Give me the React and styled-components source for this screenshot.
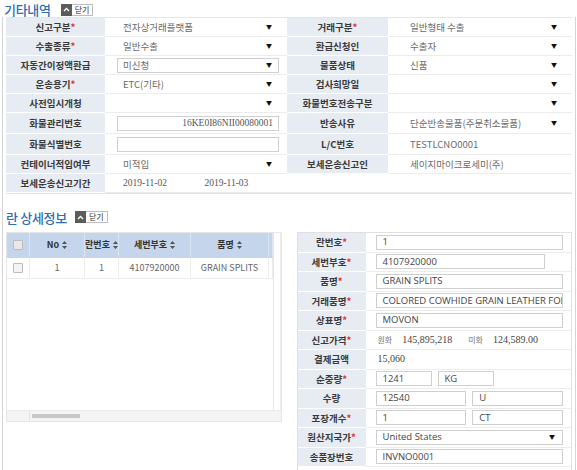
import React from "react";
import styled, { createGlobalStyle } from "styled-components";

const GlobalStyle = createGlobalStyle`
  body {
    margin: 0;
    background: #fff;
    font-family: "Open Sans", "Noto Sans CJK KR", sans-serif;
  }
`;

const Page = styled.div`
  width: 577px;
  height: 470px;
  box-sizing: border-box;
  padding: 2px 1px 1px 2px;
  overflow: hidden;
`;

const Frame = styled.div`
  border: 1px solid #d4d4d4;
  border-top: none;
  height: 467px;
  box-sizing: border-box;
  padding: 0 3px 0 3px;
  display: flex;
  flex-direction: column;
`;

const SectionHead = styled.div`
  display: flex;
  align-items: center;
  height: ${(p) => p.h}px;
  margin-left: ${(p) => p.ml || 0}px;
  margin-top: ${(p) => p.mt || 0}px;
`;

const Title = styled.div`
  font-family: "Noto Sans CJK KR", sans-serif;
  font-size: 13px;
  line-height: 15px;
  color: #2f6cb5;
  font-weight: 500;
  letter-spacing: -0.3px;
  margin-right: ${(p) => p.gap}px;
`;

const Toggle = styled.div`
  display: flex;
  height: 12px;
`;

const ToggleIcon = styled.div`
  width: 11px;
  height: 12px;
  background: #5b5b5b;
  display: flex;
  align-items: center;
  justify-content: center;
`;

const ToggleText = styled.div`
  border: 1px solid #bdbdbd;
  border-left: none;
  box-sizing: border-box;
  height: 12px;
  padding: 0 3px;
  font-family: "Noto Sans CJK KR", sans-serif;
  font-size: 8px;
  line-height: 10px;
  color: #333;
`;

const FormGrid = styled.div`
  display: grid;
  grid-template-columns: 99px 182px 101px 184px;
  grid-template-rows: 19px 19px 19px 19px 19px 21px 21px 19px 19px;
  border-top: 1px solid #e6e6e6;
  border-bottom: 1px solid #e2e2e2;
`;

const Label = styled.div`
  background: #e7ecf3;
  display: flex;
  align-items: center;
  justify-content: center;
  font-family: "Noto Sans CJK KR", sans-serif;
  font-size: 9.5px;
  line-height: 12px;
  font-weight: 700;
  color: #3a3a3a;
  border-bottom: 1px solid #fff;
  box-sizing: border-box;
  white-space: nowrap;
`;

const Req = styled.span`
  color: #e03030;
`;

const Cell = styled.div`
  display: flex;
  align-items: center;
  border-bottom: 1px solid #ececec;
  box-sizing: border-box;
  min-width: 0;
  grid-column: ${(p) => p.span || "auto"};
`;

const Field = styled.div`
  flex: 1;
  min-width: 0;
  height: 15px;
  box-sizing: border-box;
  margin: 0 8px 0 ${(p) => p.ml || 12}px;
  padding: 0 5px;
  border: 1px solid ${(p) => (p.bordered ? "#cfcfcf" : "transparent")};
  display: flex;
  align-items: center;
  justify-content: ${(p) => (p.right ? "flex-end" : "space-between")};
  font-size: 9.5px;
  line-height: 12px;
  color: #6a6a6a;
  white-space: nowrap;
  overflow: hidden;
  font-family: "Noto Sans CJK KR", sans-serif;
`;

const Arrow = styled.span`
  font-size: 6px;
  line-height: 8px;
  color: #111;
  margin-right: 1px;
`;

const DateText = styled.span`
  font-size: 9.5px;
  line-height: 12px;
  color: #555;
  font-family: "Liberation Serif", serif;
  width: ${(p) => (p.w ? `${p.w}px` : "auto")};
`;

const Bottom = styled.div`
  display: flex;
  margin-top: 7px;
  gap: 15px;
  flex: 1;
`;

const GridBox = styled.div`
  width: 276px;
  height: 190px;
  box-sizing: border-box;
  border: 1px solid #e6e6e6;
  display: flex;
  flex-direction: column;
`;

const GridMain = styled.div`
  flex: 1;
  display: flex;
  min-height: 0;
`;

const Viewport = styled.div`
  width: 266px;
  overflow: hidden;
`;

const VScroll = styled.div`
  flex: 1;
  border-left: 1px solid #e6e6e6;
  border-right: 1px solid #ececec;
`;

const Row = styled.div`
  display: flex;
  height: ${(p) => p.h}px;
  background: ${(p) => (p.head ? "#c5d5eb" : "#fff")};
  border-bottom: 1px solid ${(p) => (p.head ? "#c5d5eb" : "#ececec")};
`;

const GCell = styled.div`
  width: ${(p) => p.w}px;
  flex-shrink: 0;
  display: flex;
  align-items: center;
  justify-content: ${(p) => (p.cut ? "flex-start" : "center")};
  padding-left: ${(p) => (p.cut ? 3 : 0)}px;
  gap: 3px;
  box-sizing: border-box;
  border-right: 1px solid ${(p) => (p.head ? "#dbe5f3" : "#ececec")};
  font-family: "Noto Sans CJK KR", sans-serif;
  font-size: 9px;
  line-height: 12px;
  font-weight: ${(p) => (p.head ? 700 : 400)};
  color: ${(p) => (p.head ? "#333" : "#666")};
  white-space: nowrap;
  overflow: hidden;
`;

const Check = styled.span`
  width: 8px;
  height: 8px;
  border: 1px solid #bcbcbc;
  background: ${(p) => (p.head ? "#e8e8e8" : "#f3f3f3")};
  border-radius: 1px;
`;

const HScroll = styled.div`
  height: 10px;
  display: flex;
  background: #f4f4f4;
  border-top: 1px solid #ececec;
`;

const HArrow = styled.div`
  width: 22px;
  border-right: 1px solid #e2e2e2;
`;

const HTrack = styled.div`
  flex: 1;
  display: flex;
  align-items: center;
  padding-left: 2px;
`;

const Thumb = styled.div`
  width: 48px;
  height: 4px;
  background: #c8c8c8;
`;

const Detail = styled.div`
  width: 276px;
  box-sizing: border-box;
  border: 1px solid #e0e0e0;
  border-bottom: none;
  display: grid;
  grid-template-columns: 68px 1fr;
  grid-auto-rows: 19.5px;
`;

const DCell = styled.div`
  display: flex;
  align-items: center;
  gap: 6px;
  padding: 0 8px 0 10px;
  border-bottom: 1px solid #ececec;
  box-sizing: border-box;
  min-width: 0;
`;

const Input = styled.div`
  width: ${(p) => (p.w ? `${p.w}px` : "auto")};
  flex: ${(p) => (p.w ? "none" : 1)};
  min-width: 0;
  height: 15px;
  box-sizing: border-box;
  border: 1px solid #cfcfcf;
  padding: 0 6px;
  display: flex;
  align-items: center;
  justify-content: space-between;
  font-size: 9.5px;
  line-height: 12px;
  color: #444;
  white-space: nowrap;
  overflow: hidden;
`;

const Small = styled.span`
  font-family: "Noto Sans CJK KR", sans-serif;
  font-size: 8px;
  line-height: 10px;
  color: #777;
  margin-left: ${(p) => p.ml || 0}px;
`;

const Num = styled.span`
  font-family: "Liberation Serif", serif;
  font-size: 10px;
  line-height: 12px;
  color: #444;
  margin-left: ${(p) => p.ml || 0}px;
`;

const Chevron = () => (
  <svg width="7" height="5" viewBox="0 0 7 5">
    <path d="M1 4 L3.5 1.5 L6 4" fill="none" stroke="#fff" strokeWidth="1.3" />
  </svg>
);

const Sort = () => (
  <svg width="5" height="8" viewBox="0 0 5 8">
    <path d="M2.5 0 L5 3 L0 3 Z M2.5 8 L5 5 L0 5 Z" fill="#555" />
  </svg>
);

const Head = ({ title, h, gap, ml, mt }) => (
  <SectionHead h={h} ml={ml} mt={mt}>
    <Title gap={gap}>{title}</Title>
    <Toggle>
      <ToggleIcon>
        <Chevron />
      </ToggleIcon>
      <ToggleText>닫기</ToggleText>
    </Toggle>
  </SectionHead>
);

const L = ({ text, req }) => (
  <Label>
    {text}
    {req && <Req>*</Req>}
  </Label>
);

const Sel = ({ value, bordered, ml }) => (
  <Cell>
    <Field bordered={bordered} ml={ml}>
      <span>{value}</span>
      <Arrow>▼</Arrow>
    </Field>
  </Cell>
);

const Txt = ({ value, ml }) => (
  <Cell>
    <Field ml={ml}>
      <span>{value}</span>
    </Field>
  </Cell>
);

const cols = [
  { w: 23, head: <Check head />, body: <Check /> },
  { w: 55, head: "No", body: "1" },
  { w: 34, head: "란번호", body: "1" },
  { w: 72, head: "세번부호", body: "4107920000" },
  { w: 78, head: "품명", body: "GRAIN SPLITS" },
];

export default function App() {
  return (
    <Page>
      <GlobalStyle />
      <Head title="기타내역" h={15} gap={10} ml={2} />
      <Frame>
        <FormGrid>
          <L text="신고구분" req />
          <Sel value="전자상거래플랫폼" />
          <L text="거래구분" req />
          <Sel value="일반형태 수출" ml={16} />

          <L text="수출종류" req />
          <Sel value="일반수출" />
          <L text="환급신청인" />
          <Sel value="수출자" ml={16} />

          <L text="자동간이정액환급" />
          <Sel value="미신청" bordered />
          <L text="물품상태" />
          <Sel value="신품" ml={16} />

          <L text="운송용기" req />
          <Sel value="ETC(기타)" />
          <L text="검사희망일" />
          <Sel value="" ml={16} />

          <L text="사전임시개청" />
          <Sel value="" />
          <L text="화물번호전송구분" />
          <Sel value="" ml={16} />

          <L text="화물관리번호" />
          <Cell>
            <Field bordered right>
              <DateText>16KE0I86NII00080001</DateText>
            </Field>
          </Cell>
          <L text="반송사유" />
          <Sel value="단순반송물품(주문취소물품)" ml={16} />

          <L text="화물식별번호" />
          <Cell>
            <Field bordered />
          </Cell>
          <L text="L/C번호" />
          <Txt value="TESTLCNO0001" ml={16} />

          <L text="컨테이너적입여부" />
          <Sel value="미적입" />
          <L text="보세운송신고인" />
          <Txt value="세이지마이크로세미(주)" ml={16} />

          <L text="보세운송신고기간" />
          <Cell>
            <Field>
              <DateText w={83}>2019-11-02</DateText>
              <DateText w={70}>2019-11-03</DateText>
            </Field>
          </Cell>
          <Cell span="span 2" />
        </FormGrid>

        <Head title="란 상세정보" h={16} gap={8} mt={15} />

        <Bottom>
          <GridBox>
            <GridMain>
              <Viewport>
                <Row head h={24}>
                  {cols.map((c, i) => (
                    <GCell key={i} w={c.w} head>
                      {c.head}
                      {i > 0 && <Sort />}
                    </GCell>
                  ))}
                  <GCell w={4} head />
                </Row>
                <Row h={20}>
                  {cols.map((c, i) => (
                    <GCell key={i} w={c.w}>
                      {c.body}
                    </GCell>
                  ))}
                  <GCell w={4} cut>
                    (
                  </GCell>
                </Row>
              </Viewport>
              <VScroll />
            </GridMain>
            <HScroll>
              <HArrow />
              <HTrack>
                <Thumb />
              </HTrack>
            </HScroll>
          </GridBox>

          <Detail>
            <L text="란번호" req />
            <DCell>
              <Input>1</Input>
            </DCell>
            <L text="세번부호" req />
            <DCell>
              <Input w={169}>4107920000</Input>
            </DCell>
            <L text="품명" req />
            <DCell>
              <Input>GRAIN SPLITS</Input>
            </DCell>
            <L text="거래품명" req />
            <DCell>
              <Input>COLORED COWHIDE GRAIN LEATHER FOR HANDBAGS</Input>
            </DCell>
            <L text="상표명" req />
            <DCell>
              <Input>MOVON</Input>
            </DCell>
            <L text="신고가격" req />
            <DCell>
              <Small ml={2}>원화</Small>
              <Num ml={4}>145,895,218</Num>
              <Small ml={10}>미화</Small>
              <Num ml={4}>124,589.00</Num>
            </DCell>
            <L text="결제금액" />
            <DCell>
              <Num ml={2}>15,060</Num>
            </DCell>
            <L text="순중량" req />
            <DCell>
              <Input w={56}>1241</Input>
              <Input w={56}>KG</Input>
            </DCell>
            <L text="수량" />
            <DCell>
              <Input>12540</Input>
              <Input>U</Input>
            </DCell>
            <L text="포장개수" req />
            <DCell>
              <Input>1</Input>
              <Input>CT</Input>
            </DCell>
            <L text="원산지국가" req />
            <DCell>
              <Input>
                <span>United States</span>
                <Arrow>▼</Arrow>
              </Input>
            </DCell>
            <L text="송품장번호" />
            <DCell>
              <Input>INVNO0001</Input>
            </DCell>
          </Detail>
        </Bottom>
      </Frame>
    </Page>
  );
}
